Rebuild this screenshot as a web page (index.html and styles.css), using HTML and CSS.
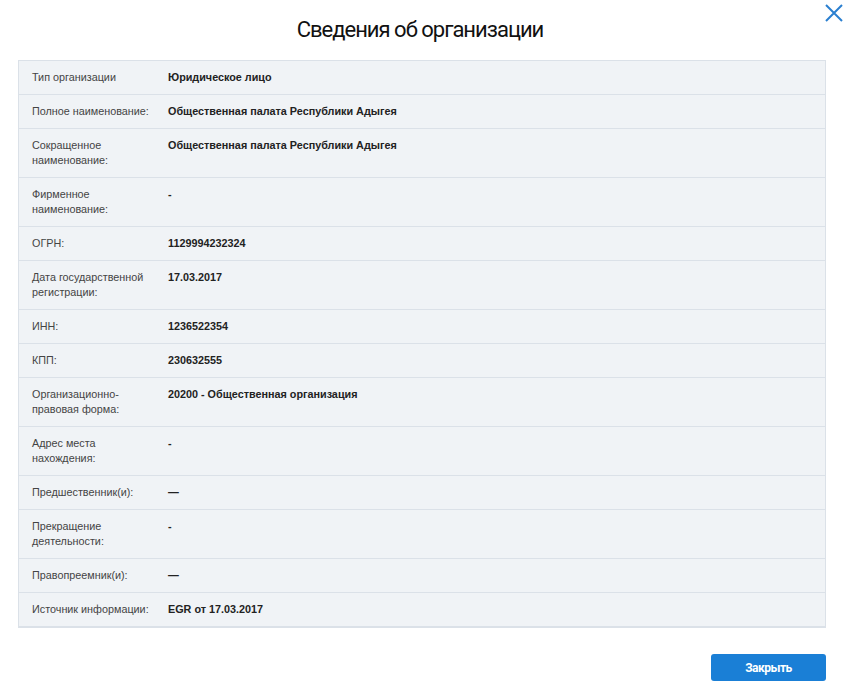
FILE: index.html
```html
<!DOCTYPE html>
<html lang="ru">
<head>
    <meta charset="UTF-8">
    <title>Сведения об организации</title>
    <link rel="stylesheet" href="styles.css">
</head>
<body>
    <div class="modal">
        <button class="close-icon" aria-label="Закрыть">
            <svg viewBox="0 0 20 20" width="20" height="20" fill="none" stroke="currentColor" stroke-width="2">
                <path d="M2 2L18 18M18 2L2 18"/>
            </svg>
        </button>
        <h1>Сведения об организации</h1>
        <div class="info-table">
            <div class="row"><div class="label">Тип организации</div><div class="value">Юридическое лицо</div></div>
            <div class="row"><div class="label">Полное наименование:</div><div class="value">Общественная палата Республики Адыгея</div></div>
            <div class="row"><div class="label">Сокращенное наименование:</div><div class="value">Общественная палата Республики Адыгея</div></div>
            <div class="row"><div class="label">Фирменное наименование:</div><div class="value">-</div></div>
            <div class="row"><div class="label">ОГРН:</div><div class="value">1129994232324</div></div>
            <div class="row"><div class="label">Дата государственной регистрации:</div><div class="value">17.03.2017</div></div>
            <div class="row"><div class="label">ИНН:</div><div class="value">1236522354</div></div>
            <div class="row"><div class="label">КПП:</div><div class="value">230632555</div></div>
            <div class="row"><div class="label">Организационно-правовая форма:</div><div class="value">20200 - Общественная организация</div></div>
            <div class="row"><div class="label">Адрес места нахождения:</div><div class="value">-</div></div>
            <div class="row"><div class="label">Предшественник(и):</div><div class="value">—</div></div>
            <div class="row"><div class="label">Прекращение деятельности:</div><div class="value">-</div></div>
            <div class="row"><div class="label">Правопреемник(и):</div><div class="value">—</div></div>
            <div class="row"><div class="label">Источник информации:</div><div class="value">EGR от 17.03.2017</div></div>
        </div>
        <div class="footer">
            <button class="button primary-button">Закрыть</button>
        </div>
    </div>
</body>
</html>
```

FILE: styles.css
```css
* {
    margin: 0;
    padding: 0;
    box-sizing: border-box;
}

:root {
    --primary-color: #1a7fd6;
    --text-primary: #222222;
    --text-secondary: #444444;
    --bg-table: #f0f3f6;
    --border-color: #dbe1e8;
}

body {
    font-family: 'Liberation Sans', Arial, sans-serif;
    background: #ffffff;
    color: var(--text-primary);
}

.modal {
    position: relative;
    padding: 16px 21px 13px 18px;
}

.close-icon {
    position: absolute;
    top: 3px;
    right: 3px;
    border: none;
    background: none;
    color: #2a7fd0;
    width: 20px;
    height: 20px;
    cursor: pointer;
}

.close-icon svg {
    display: block;
}

h1 {
    font-family: Roboto, sans-serif;
    font-weight: 400;
    font-size: 22px;
    line-height: 28px;
    text-align: center;
    color: #111111;
    margin-bottom: 16px;
    letter-spacing: -1px;
    padding-right: 4px;
}

.info-table {
    background: var(--bg-table);
    border: 1px solid var(--border-color);
    border-bottom-width: 2px;
}

.row {
    display: flex;
    border-top: 1px solid var(--border-color);
    padding: 9px 0;
    font-size: 10.8px;
    line-height: 15px;
}

.row:first-child {
    border-top: none;
}

.label {
    width: 149px;
    flex-shrink: 0;
    padding: 0 14px 0 13px;
    color: var(--text-secondary);
}

.value {
    flex: 1;
    font-weight: 700;
    color: var(--text-primary);
}

.footer {
    display: flex;
    justify-content: flex-end;
    margin-top: 26px;
}

.button {
    width: 115px;
    height: 27px;
    border: none;
    border-radius: 3px;
    font-family: Roboto, sans-serif;
    font-size: 12px;
    font-weight: 700;
    letter-spacing: -0.5px;
    cursor: pointer;
}

.primary-button {
    background: var(--primary-color);
    color: #ffffff;
}
```
